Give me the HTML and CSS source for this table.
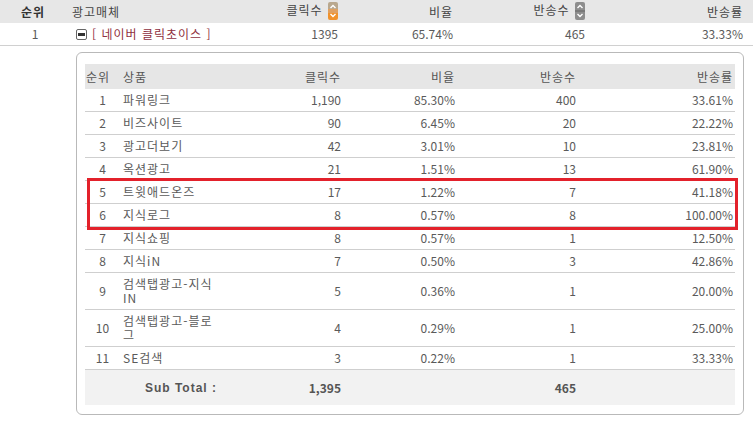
FILE: index.html
```html
<!DOCTYPE html>
<html lang="ko">
<head>
<meta charset="utf-8">
<link rel="stylesheet" href="styles.css">
</head>
<body>
<table class="main">
  <colgroup>
    <col class="m-rank"><col class="m-media"><col class="m-click"><col class="m-ratio"><col class="m-bounce"><col class="m-brate">
  </colgroup>
  <thead>
    <tr>
      <th class="rank">순위</th>
      <th class="left">광고매체</th>
      <th class="num">클릭수 <svg class="sort" width="10" height="18" viewBox="0 0 10 18"><rect x="0" y="0" width="10" height="9" rx="2" fill="#b9a88e"/><rect x="0" y="9" width="10" height="9" rx="2" fill="#f0922c"/><rect x="0" y="7" width="10" height="4" fill="#e0a060"/><path d="M2.5 6 L5 3.5 L7.5 6" fill="none" stroke="#fff" stroke-width="1.4"/><path d="M2.5 12 L5 14.5 L7.5 12" fill="none" stroke="#fff" stroke-width="1.4"/></svg></th>
      <th class="num">비율</th>
      <th class="num">반송수 <svg class="sort" width="10" height="18" viewBox="0 0 10 18"><rect x="0" y="0" width="10" height="18" rx="2" fill="#8d8d8d"/><rect x="0" y="8.5" width="10" height="1" fill="#666"/><path d="M2.5 6 L5 3.5 L7.5 6" fill="none" stroke="#fff" stroke-width="1.4"/><path d="M2.5 12 L5 14.5 L7.5 12" fill="none" stroke="#fff" stroke-width="1.4"/></svg></th>
      <th class="num last">반송률</th>
    </tr>
  </thead>
  <tbody>
    <tr class="media-row">
      <td class="rank">1</td>
      <td class="left"><span class="toggle"><span class="bar"></span></span><span class="media-name">[ 네이버 클릭초이스 ]</span></td>
      <td class="num">1395</td>
      <td class="num">65.74%</td>
      <td class="num">465</td>
      <td class="num last">33.33%</td>
    </tr>
    <tr>
      <td colspan="6" class="nest-cell">
        <div class="nest-box">
          <table class="sub">
            <colgroup>
              <col class="s-rank"><col class="s-prod"><col class="s-click"><col class="s-ratio"><col class="s-bounce"><col class="s-brate">
            </colgroup>
            <thead>
              <tr>
                <th class="srank-h">순위</th>
                <th class="prod">상품</th>
                <th class="num">클릭수</th>
                <th class="num">비율</th>
                <th class="num">반송수</th>
                <th class="num last">반송률</th>
              </tr>
            </thead>
            <tbody>
              <tr><td class="srank">1</td><td class="prod">파워링크</td><td class="num">1,190</td><td class="num">85.30%</td><td class="num">400</td><td class="num last">33.61%</td></tr>
              <tr><td class="srank">2</td><td class="prod">비즈사이트</td><td class="num">90</td><td class="num">6.45%</td><td class="num">20</td><td class="num last">22.22%</td></tr>
              <tr><td class="srank">3</td><td class="prod">광고더보기</td><td class="num">42</td><td class="num">3.01%</td><td class="num">10</td><td class="num last">23.81%</td></tr>
              <tr><td class="srank">4</td><td class="prod">옥션광고</td><td class="num">21</td><td class="num">1.51%</td><td class="num">13</td><td class="num last">61.90%</td></tr>
              <tr><td class="srank">5</td><td class="prod">트윗애드온즈</td><td class="num">17</td><td class="num">1.22%</td><td class="num">7</td><td class="num last">41.18%</td></tr>
              <tr><td class="srank">6</td><td class="prod">지식로그</td><td class="num">8</td><td class="num">0.57%</td><td class="num">8</td><td class="num last">100.00%</td></tr>
              <tr><td class="srank">7</td><td class="prod">지식쇼핑</td><td class="num">8</td><td class="num">0.57%</td><td class="num">1</td><td class="num last">12.50%</td></tr>
              <tr><td class="srank">8</td><td class="prod">지식iN</td><td class="num">7</td><td class="num">0.50%</td><td class="num">3</td><td class="num last">42.86%</td></tr>
              <tr><td class="srank">9</td><td class="prod">검색탭광고-지식IN</td><td class="num">5</td><td class="num">0.36%</td><td class="num">1</td><td class="num last">20.00%</td></tr>
              <tr><td class="srank">10</td><td class="prod">검색탭광고-블로그</td><td class="num">4</td><td class="num">0.29%</td><td class="num">1</td><td class="num last">25.00%</td></tr>
              <tr><td class="srank">11</td><td class="prod">SE검색</td><td class="num">3</td><td class="num">0.22%</td><td class="num">1</td><td class="num last">33.33%</td></tr>
              <tr class="total"><td colspan="2" class="total-label">Sub Total :</td><td class="num">1,395</td><td></td><td class="num">465</td><td></td></tr>
            </tbody>
          </table>
        </div>
      </td>
    </tr>
  </tbody>
</table>
<div class="highlight"></div>
</body>
</html>
```
FILE: styles.css
```css
html, body {
  margin: 0;
  padding: 0;
  background: #fff;
}
body {
  font-family: "Noto Sans CJK KR", "Liberation Sans", sans-serif;
  font-size: 12px;
  color: #5a5a5a;
  width: 753px;
  height: 421px;
  overflow: hidden;
}
table {
  border-collapse: collapse;
  table-layout: fixed;
}
.main { width: 753px; }
.m-rank { width: 66px; }
.m-media { width: 154px; }
.m-click { width: 120px; }
.m-ratio { width: 115px; }
.m-bounce { width: 132px; }
.m-brate { width: 166px; }

.main > thead th {
  background: #e7e7e7;
  height: 23px;
  padding: 0;
  font-weight: normal;
  color: #444;
  line-height: 14px;
  vertical-align: middle;
  letter-spacing: 1px;
}
.main > thead th.rank { font-weight: bold; color: #333; text-align: center; }
.main > thead > tr > th.left { text-align: left; padding-left: 6px; }
.main > tbody > tr > td.left { text-align: left; padding-left: 6px; }
.main > thead > tr > th.num, .main > tbody > tr > td.num { text-align: right; padding-right: 2px; }
.main > thead > tr > th.last, .main > tbody > tr > td.last { padding-right: 10px; }
.sort { vertical-align: middle; margin-left: 1px; position: relative; top: -1px; }

.media-row td {
  height: 22px;
  padding: 0;
  line-height: 14px;
  border-bottom: 1px solid #d0d0d0;
  vertical-align: middle;
}
.media-row td.rank { text-align: center; padding-left: 4px; }
.toggle {
  display: inline-block;
  width: 11px;
  height: 11px;
  box-sizing: border-box;
  border: 1px solid #666;
  border-radius: 2px;
  background: #fff;
  vertical-align: middle;
  position: relative;
  margin-left: 4px;
  margin-right: 5px;
  top: -1px;
}
.toggle .bar {
  position: absolute;
  left: 1px;
  right: 1px;
  top: 3px;
  height: 3px;
  background: #333;
}
.media-name { color: #8f3040; letter-spacing: 1px; }

.nest-cell { padding: 6px 9px 7px 76px; }
.nest-box {
  border: 1px solid #b9b9b9;
  border-radius: 6px;
  padding: 11px 8px 9px 8px;
}
.sub { width: 650px; }
.s-rank { width: 33px; }
.s-prod { width: 102px; }
.s-click { width: 123px; }
.s-ratio { width: 114px; }
.s-bounce { width: 121px; }
.s-brate { width: 157px; }

.sub th, .sub td {
  padding: 4px 0;
  line-height: 14px;
  vertical-align: middle;
}
.sub thead th {
  background: #e6e6e6;
  font-weight: normal;
  color: #555;
  height: 17px;
  padding: 4px 0;
  letter-spacing: 1px;
}
.sub tbody td { border-bottom: 1px solid #cfcfcf; }
.sub .srank-h { text-align: left; padding-left: 1px; }
.sub .srank { text-align: center; padding-left: 2px; }
.sub .prod { text-align: left; padding-left: 5px; padding-right: 3px; letter-spacing: 1px; }
.sub .num { text-align: right; padding-right: 2px; }
.sub .last { padding-right: 2px; }

.sub tr.total td {
  background: #f2f2f2;
  border-bottom: none;
  font-weight: bold;
  color: #555;
  height: 27px;
  padding: 4px 0;
}
.sub tr.total td.total-label { text-align: right; padding-right: 3px; font-family: "Liberation Sans", sans-serif; letter-spacing: 1px; }
.sub tr.total td.num { padding-right: 2px; }

.highlight {
  position: absolute;
  left: 87px;
  top: 178px;
  width: 651px;
  height: 52px;
  box-sizing: border-box;
  border: 3px solid #e3212b;
}
```
